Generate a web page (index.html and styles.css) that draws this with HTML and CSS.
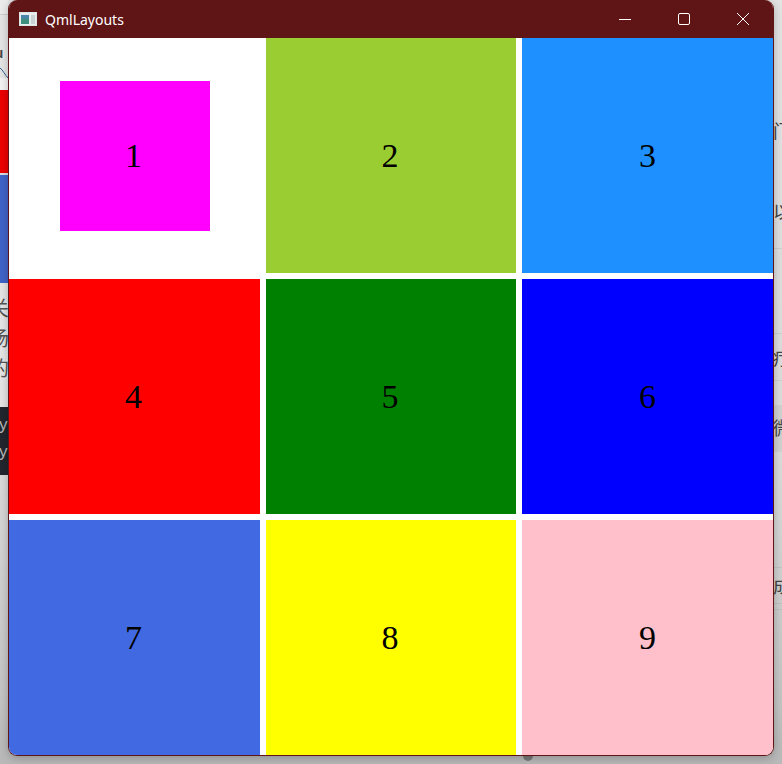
FILE: index.html
```html
<!DOCTYPE html>
<html lang="en">
<head>
    <meta charset="UTF-8">
    <title>QmlLayouts</title>
    <link rel="stylesheet" href="styles.css">
</head>
<body>
    <div class="desktop">
        <!-- bits of the page behind the window -->
        <div class="strip strip-left">
            <div class="band band-top">
                <span class="peek peek-u">u</span>
                <svg class="curve" width="8" height="12" viewBox="0 0 8 12"><path d="M0 1C3 3 5 8 8 11" stroke="#2f5f8f" fill="none"/></svg>
            </div>
            <div class="band band-red"></div>
            <div class="band band-line"></div>
            <div class="band band-blue"></div>
            <div class="band band-text">
                <span class="peek">关</span>
                <span class="peek">场</span>
                <span class="peek">的</span>
            </div>
            <div class="band band-dark">
                <span class="peek">y</span>
                <span class="peek">y</span>
            </div>
            <div class="band band-rest"></div>
        </div>

        <div class="window">
            <div class="titlebar">
                <svg class="app-icon" width="18" height="14" viewBox="0 0 18 14">
                    <rect x="0.5" y="0.5" width="17" height="13" fill="#e8eeee" stroke="#dfe6e6"/>
                    <rect x="2" y="3" width="8" height="9" fill="#3f8f7f"/>
                    <rect x="2" y="3" width="8" height="4" fill="#4a86a8"/>
                    <rect x="12" y="3" width="4" height="9" fill="#c9d3d3"/>
                </svg>
                <span class="title">QmlLayouts</span>
                <div class="controls">
                    <button class="ctl">
                        <svg width="14" height="14" viewBox="0 0 14 14"><path d="M1 7.5H13" stroke="#fff" fill="none"/></svg>
                    </button>
                    <button class="ctl">
                        <svg width="14" height="14" viewBox="0 0 14 14"><rect x="1.5" y="1.5" width="11" height="11" rx="1.5" stroke="#fff" fill="none"/></svg>
                    </button>
                    <button class="ctl">
                        <svg width="14" height="14" viewBox="0 0 14 14"><path d="M1 1L13 13M13 1L1 13" stroke="#fff" fill="none"/></svg>
                    </button>
                </div>
            </div>
            <div class="grid">
                <div class="cell cell-1"><div class="inner">1</div></div>
                <div class="cell cell-2">2</div>
                <div class="cell cell-3">3</div>
                <div class="cell cell-4">4</div>
                <div class="cell cell-5">5</div>
                <div class="cell cell-6">6</div>
                <div class="cell cell-7">7</div>
                <div class="cell cell-8">8</div>
                <div class="cell cell-9">9</div>
            </div>
        </div>

        <div class="strip strip-right">
            <span class="rpeek rpeek-1">门</span>
            <span class="rpeek rpeek-2">以</span>
            <span class="rpeek rpeek-3">疗</span>
            <span class="rpeek rpeek-4">微</span>
            <span class="rpeek rpeek-5">成</span>
        </div>

        <div class="scroll-dot"></div>
    </div>
</body>
</html>
```

FILE: styles.css
```css
html, body {
    margin: 0;
    padding: 0;
}
body {
    width: 782px;
    height: 764px;
    overflow: hidden;
    font-family: "Noto Sans CJK SC", "Liberation Sans", sans-serif;
}
.desktop {
    position: relative;
    display: flex;
    align-items: flex-start;
    height: 764px;
    background: linear-gradient(#e4e4e4, #dcdcdc 60%, #c4c4c4 92%, #b8b8b8);
}

/* strips either side of the window */
.strip {
    width: 8px;
    height: 764px;
    flex: none;
    overflow: hidden;
}
.strip-left {
    display: flex;
    flex-direction: column;
}
.band {
    width: 8px;
    overflow: hidden;
}
.band-top {
    height: 90px;
    box-sizing: border-box;
    background: linear-gradient(#ececec 14px, #cfcfcf 14px, #cfcfcf 15px, #e6e6e6 15px, #e6e6e6 78px, #f4f4f4 78px);
}
.band-red {
    height: 83px;
    background: #ee0000;
}
.band-line {
    height: 2px;
    background: #d8dde6;
}
.band-blue {
    height: 108px;
    background: #4064c8;
}
.band-text {
    height: 124px;
    background: #e6e6e6;
    padding-top: 13px;
    box-sizing: border-box;
    display: flex;
    flex-direction: column;
    gap: 6px;
}
.band-dark {
    height: 68px;
    background: #23262e;
    display: flex;
    flex-direction: column;
}
.band-rest {
    flex: 1;
}
.peek {
    display: block;
    width: 20px;
    font-size: 20px;
    line-height: 24px;
    margin-left: -11px;
    color: #555;
}
.peek-u {
    margin-top: 46px;
    margin-left: -5px;
    font-weight: bold;
    font-size: 13px;
    line-height: 14px;
    color: #444;
}
.curve {
    display: block;
    margin-top: 7px;
}
.band-dark .peek {
    color: #b8b8b8;
    font-family: "Liberation Sans", sans-serif;
    font-size: 17px;
    line-height: 27px;
    margin-left: -1px;
    position: relative;
    top: 4px;
}
.strip-right {
    display: flex;
    flex-direction: column;
    align-items: flex-start;
    color: #444;
    background: linear-gradient(
        transparent 248px, #cfcfcf 248px, #cfcfcf 249px,
        transparent 249px, transparent 333px, #cfcfcf 333px, #cfcfcf 334px,
        transparent 334px, transparent 380px, #cfcfcf 380px, #cfcfcf 381px,
        transparent 381px, transparent 405px, #d2d2d2 405px, #d2d2d2 452px,
        transparent 452px, transparent 567px, #c4c4c4 567px, #c4c4c4 568px,
        transparent 568px, transparent 603px, #c0c0c0 603px, #c0c0c0 604px,
        transparent 604px, transparent 609px, #c0c0c0 609px, #c0c0c0 610px,
        transparent 610px
    );
}
.rpeek {
    display: block;
    width: 8px;
    height: 20px;
    font-size: 18px;
    line-height: 20px;
    overflow: hidden;
    white-space: nowrap;
    flex: none;
    text-indent: -1px;
}
.rpeek-1 { margin-top: 120px; }
.rpeek-2 { margin-top: 61px; }
.rpeek-3 { margin-top: 126px; }
.rpeek-4 { margin-top: 50px; }
.rpeek-5 { margin-top: 138px; }

.scroll-dot {
    position: absolute;
    left: 523px;
    top: 751px;
    width: 10px;
    height: 10px;
    border-radius: 50%;
    background: #7a7a7a;
}

/* the window itself */
.window {
    position: relative;
    z-index: 1;
    width: 766px;
    height: 756px;
    flex: none;
    box-sizing: border-box;
    border: 1px solid #5f1416;
    border-top: none;
    border-radius: 9px;
    overflow: hidden;
    background: #fff;
    box-shadow: 0 2px 10px rgba(0, 0, 0, 0.25);
    display: flex;
    flex-direction: column;
}
.titlebar {
    height: 38px;
    flex: none;
    background: #5f1416;
    color: #fff;
    display: flex;
    align-items: center;
    padding: 0 1px 0 10px;
    font-family: "Noto Sans", "Liberation Sans", sans-serif;
    font-size: 14px;
}
.app-icon {
    margin-right: 8px;
}
.title {
    flex: 1;
}
.controls {
    display: flex;
}
.ctl {
    width: 59px;
    height: 38px;
    padding: 0;
    border: none;
    background: none;
    display: flex;
    align-items: center;
    justify-content: center;
}
.ctl svg {
    display: block;
}

.grid {
    flex: 1;
    display: grid;
    grid-template-columns: 251px 250px 251px;
    grid-template-rows: 235px 235px 235px;
    gap: 6px 6px;
}
.cell {
    display: flex;
    align-items: center;
    justify-content: center;
    font-family: "Liberation Serif", serif;
    font-size: 34px;
    color: #000;
}
.inner {
    width: 150px;
    height: 150px;
    box-sizing: border-box;
    padding-right: 2px;
    background: #ff00ff;
    display: flex;
    align-items: center;
    justify-content: center;
}
.cell-2, .cell-4, .cell-5, .cell-7, .cell-8 {
    padding-right: 2px;
}
.cell-1 { background: #fff; }
.cell-2 { background: #9acd32; }
.cell-3 { background: #1e90ff; }
.cell-4 { background: #ff0000; }
.cell-5 { background: #008000; }
.cell-6 { background: #0000ff; }
.cell-7 { background: #4169e1; }
.cell-8 { background: #ffff00; }
.cell-9 { background: #ffc0cb; }
```
